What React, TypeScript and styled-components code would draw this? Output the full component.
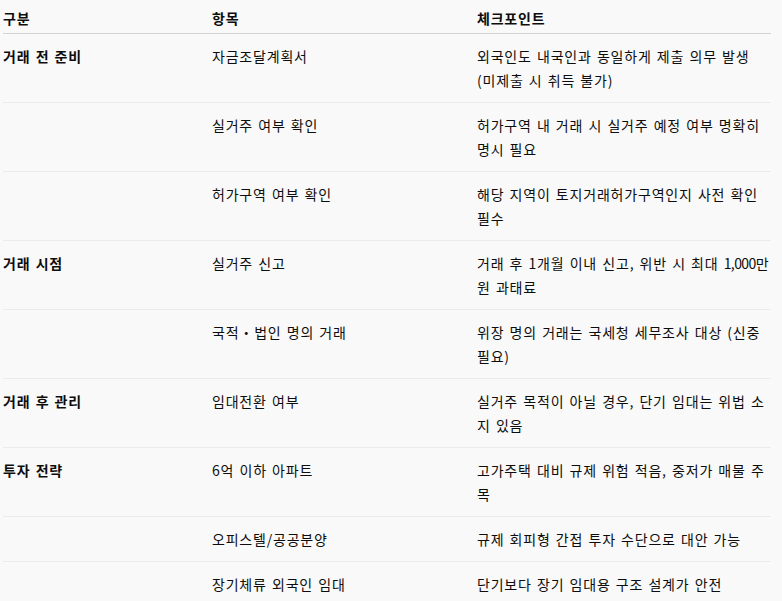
import React from "react";
import styled, { createGlobalStyle } from "styled-components";

const GlobalStyle = createGlobalStyle`
  html, body {
    margin: 0;
    padding: 0;
    background: #f9f9f9;
  }
  body {
    font-family: "Noto Sans CJK KR", "Noto Sans", sans-serif;
    color: #0d0d0d;
  }
`;

const Page = styled.div`
  padding: 0 11px 0 3px;
  height: 601px;
  overflow: hidden;
`;

const Table = styled.table`
  width: 768px;
  border-collapse: collapse;
  table-layout: fixed;
  font-size: 14px;
  line-height: 24px;
  letter-spacing: 0.8px;
  word-spacing: 1.3px;
`;

const HeadCell = styled.th<{ $w: number }>`
  box-sizing: border-box;
  width: ${p => p.$w}px;
  text-align: left;
  font-weight: 700;
  padding: 6px 8px 3px 0;
  border-bottom: 1px solid #d4d4d4;
  vertical-align: top;
  &:last-child {
    padding-right: 0;
  }
`;

const Row = styled.tr`
  border-bottom: 1px solid #ebebeb;
`;

const Cell = styled.td<{ $bold?: boolean }>`
  box-sizing: border-box;
  padding: 10px 8px 10px 0;
  vertical-align: top;
  font-weight: ${p => (p.$bold ? 700 : 400)};
  &:last-child {
    padding-right: 0;
  }
`;

const Num = styled.span`
  letter-spacing: -0.6px;
`;

type Item = { group?: string; item: string; check: string };

const rows: Item[] = [
  { group: "거래 전 준비", item: "자금조달계획서", check: "외국인도 내국인과 동일하게 제출 의무 발생 (미제출 시 취득 불가)" },
  { item: "실거주 여부 확인", check: "허가구역 내 거래 시 실거주 예정 여부 명확히 명시 필요" },
  { item: "허가구역 여부 확인", check: "해당 지역이 토지거래허가구역인지 사전 확인 필수" },
  { group: "거래 시점", item: "실거주 신고", check: "거래 후 1개월 이내 신고, 위반 시 최대 1,000만원 과태료" },
  { item: "국적・법인 명의 거래", check: "위장 명의 거래는 국세청 세무조사 대상 (신중 필요)" },
  { group: "거래 후 관리", item: "임대전환 여부", check: "실거주 목적이 아닐 경우, 단기 임대는 위법 소지 있음" },
  { group: "투자 전략", item: "6억 이하 아파트", check: "고가주택 대비 규제 위험 적음, 중저가 매물 주목" },
  { item: "오피스텔/공공분양", check: "규제 회피형 간접 투자 수단으로 대안 가능" },
  { item: "장기체류 외국인 임대", check: "단기보다 장기 임대용 구조 설계가 안전" },
];

// digits in Noto run wider than the reference font, so tighten the tracking on them
function withNums(text: string) {
  return text.split(/([\d,]{2,})/).map((part, i) =>
    /^[\d,]{2,}$/.test(part) ? <Num key={i}>{part}</Num> : part,
  );
}

export default function App() {
  return (
    <Page>
      <GlobalStyle />
      <Table>
        <thead>
          <tr>
            <HeadCell $w={209}>구분</HeadCell>
            <HeadCell $w={265}>항목</HeadCell>
            <HeadCell $w={294}>체크포인트</HeadCell>
          </tr>
        </thead>
        <tbody>
          {rows.map((r, i) => (
            <Row key={i}>
              <Cell $bold>{r.group ?? ""}</Cell>
              <Cell>{r.item}</Cell>
              <Cell>{withNums(r.check)}</Cell>
            </Row>
          ))}
        </tbody>
      </Table>
    </Page>
  );
}
